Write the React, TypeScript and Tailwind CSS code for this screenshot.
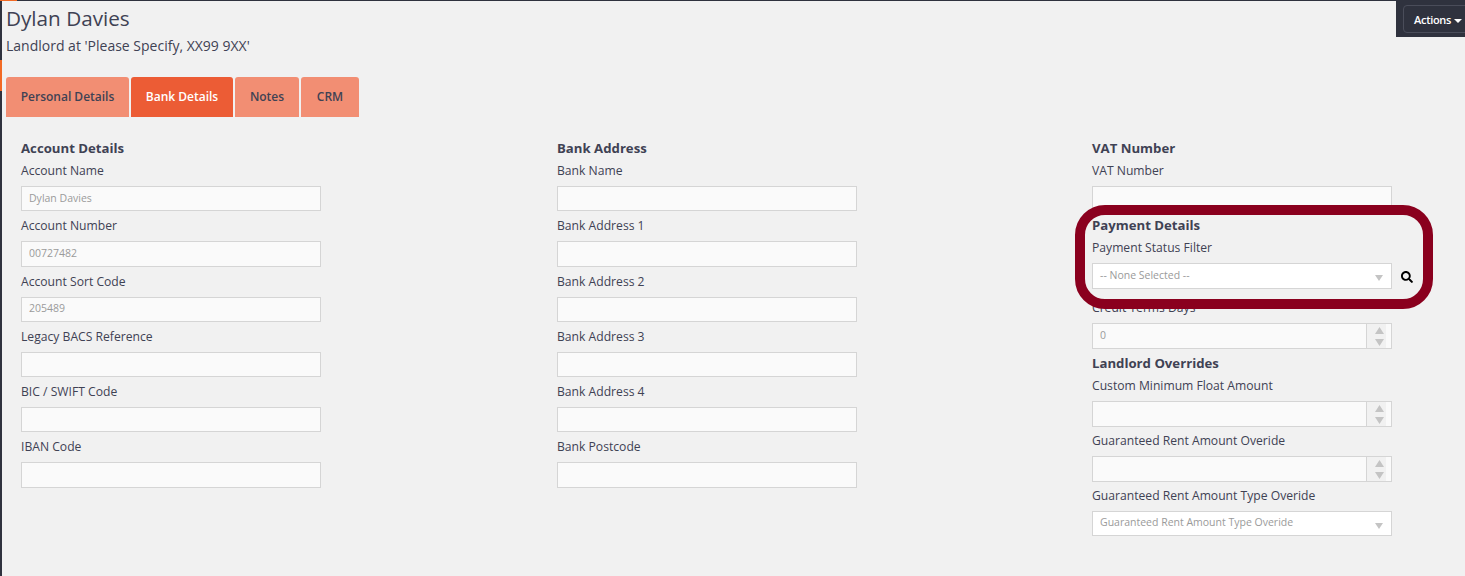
import { FaSearch } from "react-icons/fa";

const labelCls = "block text-[12.15px] leading-[17px] text-[#3f4254]";
const headingCls = "text-[13.2px] leading-[18px] font-bold text-[#3f4254]";
const boxCls = "w-[300px] border border-[#d5d5d5] text-[10.5px] text-[#9a9a9a]";

function TextBox({ value = "" }: { value?: string }) {
  return (
    <input
      readOnly
      value={value}
      className={`${boxCls} block h-[25.4px] bg-[#fafafa] px-[7px] pb-[2px] outline-none`}
    />
  );
}

function Field({ label, value }: { label: string; value?: string }) {
  return (
    <div className="h-[55.25px] pt-[5px]">
      <label className={labelCls}>{label}</label>
      <div className="mt-[7px]">
        <TextBox value={value} />
      </div>
    </div>
  );
}

function Triangle({ down = true, w = 9, h = 7 }: { down?: boolean; w?: number; h?: number }) {
  return (
    <svg width={w} height={h} viewBox="0 0 10 7" preserveAspectRatio="none" className="block">
      <path d={down ? "M0 0H10L5 7Z" : "M5 0L10 7H0Z"} fill="#c4c4c4" />
    </svg>
  );
}

function NumberBox({ value = "" }: { value?: string }) {
  return (
    <div className={`${boxCls} flex h-[26px] bg-[#fafafa]`}>
      <div className="flex flex-1 items-center px-[7px]">{value}</div>
      <div className="flex w-[20px] flex-col justify-center gap-[5px] border-l border-[#d5d5d5] bg-[#f1f1f1] pl-[8px]">
        <Triangle down={false} />
        <Triangle />
      </div>
      <div className="w-[5px]" />
    </div>
  );
}

function SelectBox({ text, w = "w-[300px]", h = "h-[26px]" }: { text: string; w?: string; h?: string }) {
  return (
    <div className={`${boxCls} ${w} ${h} flex items-center justify-between bg-white pb-[1px] pl-[7px] pr-[8px]`}>
      <span>{text}</span>
      <span className="mt-[5px]">
        <Triangle w={8} h={6} />
      </span>
    </div>
  );
}

const accountFields = [
  { label: "Account Name", value: "Dylan Davies" },
  { label: "Account Number", value: "00727482" },
  { label: "Account Sort Code", value: "205489" },
  { label: "Legacy BACS Reference" },
  { label: "BIC / SWIFT Code" },
  { label: "IBAN Code" },
];

const bankFields = ["Bank Name", "Bank Address 1", "Bank Address 2", "Bank Address 3", "Bank Address 4", "Bank Postcode"];

const tabs = [
  { name: "Personal Details", w: "w-[123px]" },
  { name: "Bank Details", w: "w-[102px]", active: true },
  { name: "Notes", w: "w-[64px]" },
  { name: "CRM", w: "w-[58px]" },
];

export default function App() {
  return (
    <div className="relative h-[576px] border-t border-[#2f323e] bg-[#f1f1f1] pl-[2px] font-['Open_Sans',sans-serif]">
      {/* left rail */}
      <div className="absolute bottom-0 left-0 top-0 w-[2px] bg-[#2f323e]">
        <div className="mt-[59px] h-[31px] bg-[#f26a25]" />
      </div>
      <div className="absolute -top-px left-0 h-px w-[17px] bg-[#f26a25]" />

      {/* actions */}
      <div className="absolute right-0 top-0 flex h-[36px] w-[69px] items-start overflow-hidden bg-[#2f323e] pl-[7px] pt-[4px]">
        <button className="flex h-[28px] w-[70px] shrink-0 items-center gap-[3px] rounded-[4px] border border-[#4a4d5a] pl-[10px] pt-[3px] text-[11px] font-semibold tracking-[-0.3px] text-white">
          Actions
          <span className="h-0 w-0 border-x-[4px] border-t-[4px] border-x-transparent border-t-white" />
        </button>
      </div>

      <div className="pl-[4px] pt-[4px]">
        <h1 className="text-[20.7px] leading-[27px] text-[#3f4254]">Dylan Davies</h1>
        <p className="mt-[4px] text-[14px] leading-[20px] text-[#3f4254]">Landlord at 'Please Specify, XX99 9XX'</p>
      </div>

      <div className="ml-[4px] mt-[21px] flex gap-[2px]">
        {tabs.map((t) => (
          <div
            key={t.name}
            className={`flex h-[40px] items-center justify-center rounded-t-[3px] text-[12px] font-semibold ${t.w} ${
              t.active ? "bg-[#ec5c35] text-white" : "bg-[#f28e73] text-[#3f4254]"
            }`}
          >
            {t.name}
          </div>
        ))}
      </div>

      <div className="mt-[22px] grid grid-cols-[536px_535px_1fr] pl-[19px]">
        <div>
          <h3 className={headingCls}>Account Details</h3>
          {accountFields.map((f) => (
            <Field key={f.label} label={f.label} value={f.value} />
          ))}
        </div>

        <div>
          <h3 className={headingCls}>Bank Address</h3>
          {bankFields.map((f) => (
            <Field key={f} label={f} />
          ))}
        </div>

        <div>
          <h3 className={headingCls}>VAT Number</h3>
          <Field label="VAT Number" />

          <h3 className={`${headingCls} mt-[4px]`}>Payment Details</h3>
          <label className={`${labelCls} mt-[5px]`}>Payment Status Filter</label>
          <div className="mt-[7px] flex items-center">
            <SelectBox text="-- None Selected --" w="w-[299px]" />
            <FaSearch className="ml-[9px] mt-[2px] text-[12px] text-black" />
          </div>

          <label className={`${labelCls} mt-[10px]`}>Credit Terms Days</label>
          <div className="mt-[7px]">
            <NumberBox value="0" />
          </div>

          <h3 className={`${headingCls} mt-[5px]`}>Landlord Overrides</h3>
          <label className={`${labelCls} mt-[5px]`}>Custom Minimum Float Amount</label>
          <div className="mt-[7px]">
            <NumberBox />
          </div>
          <label className={`${labelCls} mt-[5px]`}>Guaranteed Rent Amount Overide</label>
          <div className="mt-[7px]">
            <NumberBox />
          </div>
          <label className={`${labelCls} mt-[5px]`}>Guaranteed Rent Amount Type Overide</label>
          <div className="mt-[7px]">
            <SelectBox text="Guaranteed Rent Amount Type Overide" h="h-[25px]" />
          </div>
        </div>
      </div>

      {/* annotation ring drawn over the form */}
      <div className="pointer-events-none absolute left-[1075px] top-[204px] h-[104px] w-[358px] rounded-[30px] border-[10px] border-[#8a001e]" />
    </div>
  );
}
